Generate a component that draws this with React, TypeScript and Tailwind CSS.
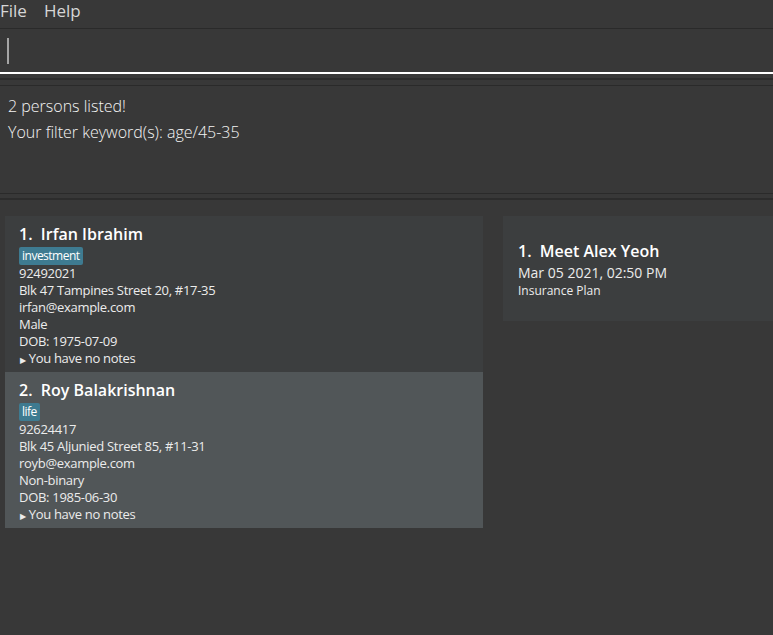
import React from 'react'

type Person = {
    name: string
    tag: string
    phone: string
    address: string
    email: string
    gender: string
    dob: string
}

const persons: Person[] = [
    {
        name: 'Irfan Ibrahim',
        tag: 'investment',
        phone: '92492021',
        address: 'Blk 47 Tampines Street 20, #17-35',
        email: 'irfan@example.com',
        gender: 'Male',
        dob: '1975-07-09',
    },
    {
        name: 'Roy Balakrishnan',
        tag: 'life',
        phone: '92624417',
        address: 'Blk 45 Aljunied Street 85, #11-31',
        email: 'royb@example.com',
        gender: 'Non-binary',
        dob: '1985-06-30',
    },
]

const PersonCard = ({ person, index }: { person: Person; index: number }) => (
    <div
        className={`h-[156px] pl-[14px] pt-[8px] ${index % 2 === 0 ? 'bg-[#3c3e3f]' : 'bg-[#515658]'}`}
    >
        <h3 className="text-[16px] font-semibold leading-[20px] text-white">
            {index + 1}.&nbsp; {person.name}
        </h3>
        <div className="mt-[3px] flex">
            <span className="rounded-[2px] bg-[#3e7b91] px-[3px] text-[12px] leading-[18px] tracking-[-0.5px] text-white">
                {person.tag}
            </span>
        </div>
        <div className="text-[13px] leading-[17px] tracking-[-0.3px] text-[#ececec]">
            <p>{person.phone}</p>
            <p>{person.address}</p>
            <p>{person.email}</p>
            <p>{person.gender}</p>
            <p>DOB: {person.dob}</p>
            <p>
                <span className="ml-[1px] mr-[3px] text-[8px]">▶</span>You have no notes
            </p>
        </div>
    </div>
)

export default function App() {
    return (
        <div className="flex h-[635px] w-[773px] flex-col overflow-hidden bg-[#383838] font-['Open_Sans','Noto_Sans',sans-serif]">
            <nav className="flex h-[28px] gap-[17px] text-[17px] leading-[22px] text-[#d6d6d6]">
                <span>File</span>
                <span>Help</span>
            </nav>
            <div className="h-px bg-[#2a2a2a]" />
            <div className="flex h-[43px] items-center px-[7px]">
                <div className="h-[26px] w-[2px] bg-[#a5a5a5]" />
            </div>
            <div className="h-[2px] bg-white" />
            <div className="mt-[4px] h-[2px] bg-[#2c2c2c]" />
            <div className="mt-[5px] h-px bg-[#2a2a2a]" />
            <div className="h-[107px] px-[8px] pt-[7px] text-[16px] font-light leading-[26px] text-[#f4f4f4]">
                <p>2 persons listed!</p>
                <p>Your filter keyword(s): age/45-35</p>
            </div>
            <div className="h-px bg-[#2a2a2a]" />
            <div className="mt-[4px] h-[2px] bg-[#2c2c2c]" />
            <div className="flex flex-1 gap-[20px] pl-[5px] pt-[16px]">
                <div className="w-[478px]">
                    {persons.map((p, i) => (
                        <PersonCard key={p.name} person={p} index={i} />
                    ))}
                </div>
                <div className="flex-1">
                    <div className="h-[105px] bg-[#3c3e3f] pl-[15px] pt-[24px]">
                        <h3 className="text-[16px] font-semibold leading-[22px] text-white">
                            1.&nbsp; Meet Alex Yeoh
                        </h3>
                        <p className="text-[14px] leading-[22px] text-[#ececec]">
                            Mar 05 2021, 02:50 PM
                        </p>
                        <p className="text-[12px] leading-[14px] text-[#ececec]">Insurance Plan</p>
                    </div>
                </div>
            </div>
        </div>
    )
}
